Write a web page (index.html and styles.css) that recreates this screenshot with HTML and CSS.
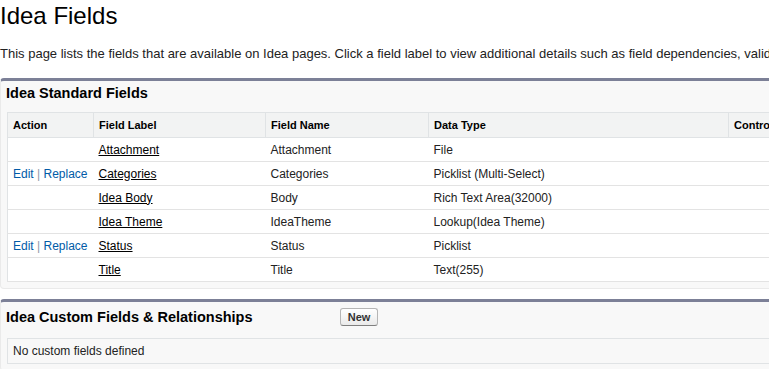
FILE: index.html
```html
<!DOCTYPE html>
<html lang="en">
<head>
<meta charset="utf-8">
<title>Idea Fields</title>
<link rel="stylesheet" href="styles.css">
</head>
<body>
<div class="page">
  <h1 class="page-title">Idea Fields</h1>
  <p class="intro">This page lists the fields that are available on Idea pages. Click a field label to view additional details such as field dependencies, validation rules, and history tracking settings for the field.</p>

  <section class="block">
    <div class="block-header">
      <h2 class="block-title">Idea Standard Fields</h2>
    </div>
    <div class="block-body">
      <table class="list">
        <thead>
          <tr>
            <th class="c-action">Action</th>
            <th class="c-label">Field Label</th>
            <th class="c-name">Field Name</th>
            <th class="c-type">Data Type</th>
            <th class="c-ctrl">Controlling Field</th>
          </tr>
        </thead>
        <tbody>
          <tr><td></td><td><a href="#" class="flabel">Attachment</a></td><td>Attachment</td><td>File</td><td></td></tr>
          <tr><td class="actions"><a href="#">Edit</a> <span class="sep">|</span> <a href="#">Replace</a></td><td><a href="#" class="flabel">Categories</a></td><td>Categories</td><td>Picklist (Multi-Select)</td><td></td></tr>
          <tr><td></td><td><a href="#" class="flabel">Idea Body</a></td><td>Body</td><td>Rich Text Area(32000)</td><td></td></tr>
          <tr><td></td><td><a href="#" class="flabel">Idea Theme</a></td><td>IdeaTheme</td><td>Lookup(Idea Theme)</td><td></td></tr>
          <tr><td class="actions"><a href="#">Edit</a> <span class="sep">|</span> <a href="#">Replace</a></td><td><a href="#" class="flabel">Status</a></td><td>Status</td><td>Picklist</td><td></td></tr>
          <tr><td></td><td><a href="#" class="flabel">Title</a></td><td>Title</td><td>Text(255)</td><td></td></tr>
        </tbody>
      </table>
    </div>
  </section>

  <section class="block">
    <div class="block-header">
      <h2 class="block-title title-cell">Idea Custom Fields &amp; Relationships</h2>
      <button class="btn" type="button">New</button>
    </div>
    <div class="block-body">
      <div class="no-rows">No custom fields defined</div>
    </div>
  </section>
</div>
</body>
</html>
```

FILE: styles.css
```css
html, body {
  margin: 0;
  padding: 0;
  overflow: hidden;
  background: #ffffff;
}

body {
  font-family: "Liberation Sans", Arial, sans-serif;
  font-size: 12px;
  color: #222222;
}

.page {
  width: 1110px;
}

.page-title {
  margin: 0;
  padding-top: 2px;
  font-size: 24px;
  line-height: 28px;
  font-weight: normal;
  color: #000000;
}

.intro {
  margin: 16px 0 0;
  font-size: 13px;
  line-height: 15px;
  color: #222222;
  white-space: nowrap;
}

.block {
  margin-top: 17px;
  background: #f8f8f8;
  border: 1px solid #eaeaea;
  border-top: 3px solid #7c8097;
  border-radius: 4px;
}

.block + .block {
  margin-top: 10px;
}

.block-header {
  display: flex;
  align-items: center;
  padding: 4px 0 0 5px;
}

.block-title {
  margin: 0;
  font-size: 14.5px;
  line-height: 17px;
  font-weight: bold;
  color: #000000;
}

.title-cell {
  width: 334px;
  flex: none;
}

.btn {
  margin: 2px 0;
  height: 18px;
  width: 38px;
  padding: 0;
  font-family: "Liberation Sans", Arial, sans-serif;
  font-size: 11px;
  font-weight: bold;
  color: #333333;
  background: linear-gradient(#ffffff, #eaeaea);
  border: 1px solid #b5b5b5;
  border-bottom-color: #7f7f7f;
  border-radius: 3px;
}

.block-body {
  padding: 10px 20px 6px 6px;
}

.list {
  width: 1083px;
  border-collapse: collapse;
  background: #ffffff;
  border: 1px solid #e0e3e5;
}

.list th {
  height: 24px;
  padding: 0 5px;
  text-align: left;
  font-size: 11px;
  font-weight: bold;
  color: #000000;
  background: #f2f3f3;
  border-right: 1px solid #e0e3e5;
  border-bottom: 1px solid #e0e3e5;
}

.list td {
  height: 23px;
  padding: 0 5px;
  border-bottom: 1px solid #e3e3e3;
  white-space: nowrap;
}

.c-action { width: 75px; }
.c-label { width: 161px; }
.c-name { width: 152px; }
.c-type { width: 289px; }

.flabel {
  color: #000000;
  text-decoration: underline;
}

.actions a {
  color: #015ba7;
  text-decoration: none;
}

.actions .sep {
  color: #8c9aa8;
}

.no-rows {
  height: 24px;
  line-height: 24px;
  padding: 0 5px;
  border: 1px solid #e0e3e5;
  background: #f8f8f8;
  color: #222222;
}
```
